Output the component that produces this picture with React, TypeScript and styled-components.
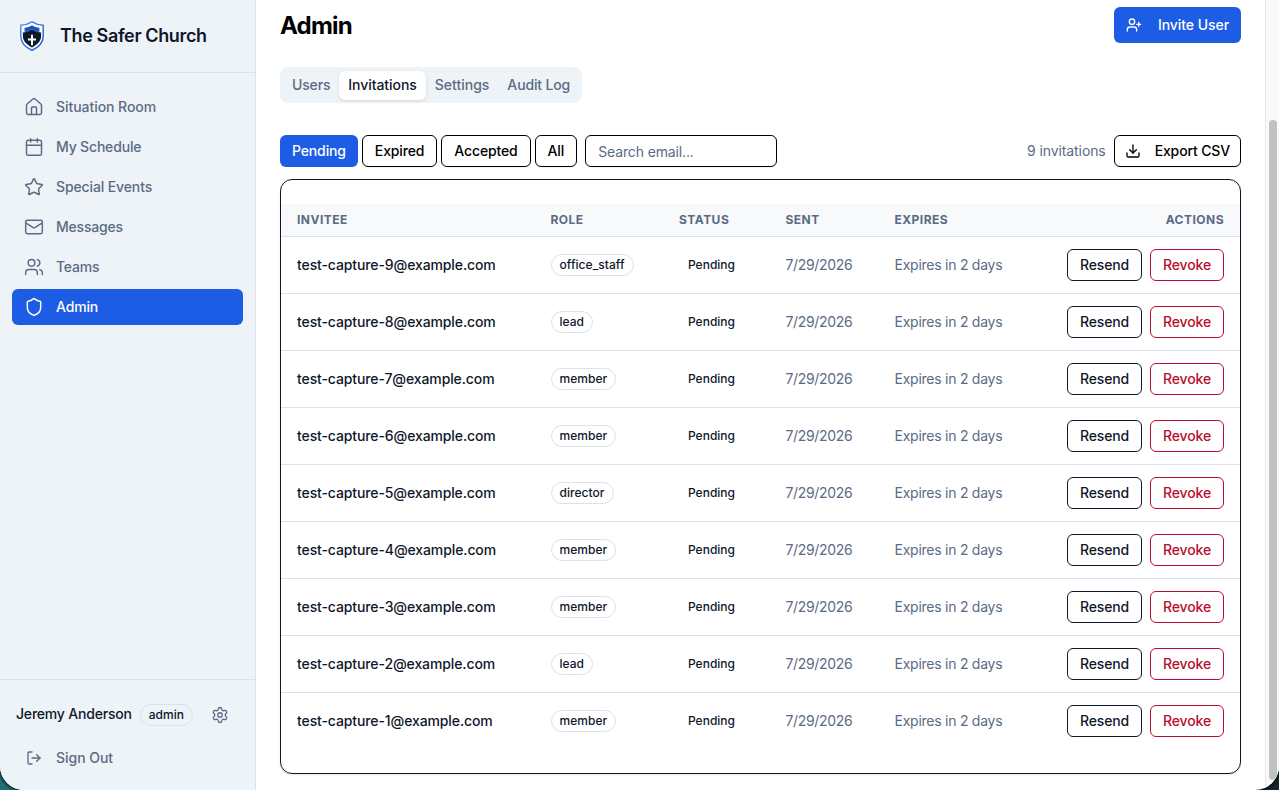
import React from 'react';
import styled, { createGlobalStyle, css } from 'styled-components';
import { House, Calendar, Star, Mail, Users, Shield, Settings, LogOut, UserPlus, Download } from 'lucide-react';

const GlobalStyle = createGlobalStyle`
  *, *::before, *::after { box-sizing: border-box; }
  body {
    margin: 0;
    overflow: hidden;
    background: linear-gradient(to right, #1d6f70 0, #1d6f70 40px, #14252c 60%);
    font-family: Inter, "Liberation Sans", sans-serif;
    font-size: 14px;
    line-height: 20px;
    color: #0f172a;
    -webkit-font-smoothing: antialiased;
  }
  button, input { font: inherit; color: inherit; margin: 0; }
`;

const Window = styled.div`
  display: flex;
  height: 790px;
  overflow: hidden;
  background: #fff;
  border-radius: 0 0 24px 24px;
  box-shadow: 0 0 3px 1px #000;
`;

const Sidebar = styled.aside`
  display: flex;
  flex-direction: column;
  width: 256px;
  flex: none;
  background: #eef3f8;
  border-right: 1px solid #dbe2ea;
`;

const Brand = styled.div`
  display: flex;
  align-items: center;
  gap: 16px;
  height: 73px;
  padding: 0 20px;
  border-bottom: 1px solid #dbe2ea;
  font-size: 18px;
  font-weight: 600;
  letter-spacing: -0.37px;
  svg { flex: none; }
`;

const Nav = styled.nav`
  display: flex;
  flex-direction: column;
  flex: 1;
  gap: 4px;
  padding: 16px 12px;
`;

const NavItem = styled.a<{ $active?: boolean; $tracking?: number }>`
  display: flex;
  align-items: center;
  gap: 12px;
  height: 36px;
  padding: 0 12px;
  border-radius: 6px;
  font-weight: 500;
  letter-spacing: ${p => p.$tracking ?? -0.1}px;
  color: ${p => (p.$active ? '#fff' : '#5b6b84')};
  background: ${p => (p.$active ? '#1d5ce5' : 'transparent')};
`;

const IconSlot = styled.span`
  display: flex;
  justify-content: center;
  width: 20px;
`;

const Account = styled.div`
  display: flex;
  flex-direction: column;
  gap: 7px;
  height: 111px;
  padding: 16px 12px 14px;
  border-top: 1px solid #dbe2ea;
`;

const Profile = styled.div`
  display: flex;
  align-items: center;
  height: 38px;
  padding-left: 4px;
`;

const ProfileName = styled.span`
  padding-bottom: 2px;
  font-weight: 500;
  letter-spacing: -0.2px;
`;

const GearButton = styled.span`
  display: flex;
  margin-left: 18px;
  color: #5b6b84;
`;

const Badge = styled.span<{ $plain?: boolean }>`
  display: inline-flex;
  align-items: center;
  height: 22px;
  padding: 0 8px;
  border: 1px solid ${p => (p.$plain ? 'transparent' : '#dbe2ec')};
  border-radius: 11px;
  font-size: 12px;
  line-height: 16px;
  font-weight: 500;
  letter-spacing: ${p => (p.$plain ? 0 : 0.04)}px;
  font-variant-ligatures: none;
`;

const ProfileBadge = styled(Badge)`
  margin-left: 8px;
`;

const Main = styled.main`
  flex: 1;
  padding: 7px 24px 0;
`;

const PageHeader = styled.header`
  display: flex;
  justify-content: space-between;
  height: 60px;
`;

const Title = styled.h1`
  margin: 0;
  font-size: 24px;
  line-height: 37px;
  font-weight: 700;
  letter-spacing: -0.8px;
  color: #000;
`;

const Button = styled.button<{ $tone?: 'primary' | 'ink' | 'danger' }>`
  display: inline-flex;
  align-items: center;
  height: 32px;
  padding: 0 12px;
  border: 1px solid #000;
  border-radius: 6px;
  background: #fff;
  font-weight: 500;
  letter-spacing: -0.14px;
  color: #000;
  white-space: nowrap;
  box-shadow: 0 1px 2px rgba(0, 0, 0, 0.05);
  ${p => p.$tone === 'primary' && css`
    border: 0;
    background: #1d5ce5;
    color: #fff;
    box-shadow: none;
  `}
  ${p => p.$tone === 'ink' && css`
    border-color: #0f172a;
    color: #0f172a;
    box-shadow: none;
  `}
  ${p => p.$tone === 'danger' && css`
    border-color: #b80d2c;
    color: #b80d2c;
    box-shadow: none;
  `}
`;

const InviteButton = styled(Button)`
  gap: 16px;
  height: 36px;
  letter-spacing: -0.06px;
`;

const ExportButton = styled(Button)`
  gap: 14px;
  padding: 0 10px;
`;

const Tabs = styled.div`
  display: inline-flex;
  align-items: center;
  height: 36px;
  padding: 0 3px;
  border-radius: 8px;
  background: #eef3f8;
  vertical-align: top;
`;

const Tab = styled.span<{ $active?: boolean; $tracking: number }>`
  display: flex;
  align-items: center;
  height: 29px;
  padding: 0 9px;
  border-radius: 6px;
  font-weight: 500;
  letter-spacing: ${p => p.$tracking}px;
  color: ${p => (p.$active ? '#0f172a' : '#5b6b84')};
  ${p => p.$active && css`
    background: #fff;
    box-shadow: 0 1px 3px rgba(0, 0, 0, 0.12);
  `}
`;

const Toolbar = styled.div`
  display: flex;
  align-items: center;
  gap: 4px;
  margin: 32px 0 12px;
`;

const Search = styled.input`
  width: 192px;
  height: 32px;
  margin-left: 4px;
  padding: 0 12px;
  border: 1px solid #000;
  border-radius: 6px;
  background: #fff;
  outline: none;
  letter-spacing: -0.13px;
  box-shadow: 0 1px 2px rgba(0, 0, 0, 0.05);
  &::placeholder { color: #5b6b84; opacity: 1; }
`;

const Count = styled.span`
  margin: 0 4px 0 auto;
  letter-spacing: -0.1px;
  color: #5b6b84;
`;

const Card = styled.section`
  padding: 24px 0;
  border: 1px solid #0f172a;
  border-radius: 12px;
  background: #fff;
  box-shadow: 0 1px 2px rgba(0, 0, 0, 0.1);
`;

const Row = styled.div`
  display: grid;
  grid-template-columns: 253.5px 128.5px 106.5px 109px 1fr auto;
  align-items: center;
  height: 57px;
  padding: 0 16px;
  border-bottom: 1px solid #dbe2ec;
  color: #5b6b84;
  &:last-child { height: 56px; border-bottom: 0; }
`;

const HeadRow = styled(Row)`
  height: 33px;
  padding-bottom: 1px;
  background: #f7f9fb;
  font-size: 12px;
  line-height: 16px;
  font-weight: 700;
  letter-spacing: 0.48px;
`;

const Email = styled.span`
  font-weight: 500;
  letter-spacing: -0.11px;
  color: #0f172a;
`;

const BadgeCell = styled.span`
  display: flex;
  color: #0f172a;
`;

const SentDate = styled.span`
  letter-spacing: -0.33px;
`;

const Expiry = styled.span`
  letter-spacing: -0.25px;
`;

const Actions = styled.div`
  display: flex;
  gap: 8px;
`;

const ScrollTrack = styled.div`
  width: 14px;
  flex: none;
  padding: 120px 2px 10px 3px;
  border-left: 1px solid #e8e8e8;
  background: #fafafa;
`;

const ScrollThumb = styled.div`
  width: 8px;
  height: 660px;
  border-radius: 4px;
  background: #c1c1c1;
`;

const Logo = () => (
  <svg width="24" height="30" viewBox="0 0 24 30">
    <defs>
      <linearGradient id="rim" x1="0" y1="0" x2="1" y2="1">
        <stop offset="0" stopColor="#4b9bf0" />
        <stop offset="1" stopColor="#1d58d8" />
      </linearGradient>
    </defs>
    <path d="M12 .8C8.500 3 4.500 4 .8 4.300V15c0 7 5 11.500 11.200 14.300C18.200 26.500 23.200 22 23.200 15V4.300C19.500 4 15.500 3 12 .8Z" fill="#fff" stroke="url(#rim)" strokeWidth="1.500" />
    <path d="M12 4.200C9.700 5.600 7.200 6.400 4.600 6.700V12H19.400V6.700C16.800 6.400 14.300 5.600 12 4.200Z" fill="#1c50c8" />
    <path d="M12 8.300C9 10.300 6 11.100 2.900 11.500v3.800C2.900 20 7 24 12 26.500c5-2.500 9.100-6.500 9.100-11.200v-3.800C18 11.100 15 10.300 12 8.300Z" fill="#10182c" />
    <path d="M3.500 11.300C7 10.800 9.600 9.800 12 8.200c2.400 1.600 5 2.600 8.500 3.100" fill="none" stroke="#dfe8f5" strokeWidth=".4" strokeDasharray="1 .6" />
    <path d="M11 13.700h2v3.700h3v2h-3V24.300h-2v-4.900H8v-2h3Z" fill="#fff" />
  </svg>
);

const navigation = [
  { label: 'Situation Room', Icon: House, tracking: -0.05 },
  { label: 'My Schedule', Icon: Calendar, tracking: -0.18 },
  { label: 'Special Events', Icon: Star, tracking: -0.12 },
  { label: 'Messages', Icon: Mail, tracking: -0.22 },
  { label: 'Teams', Icon: Users, tracking: -0.22 },
  { label: 'Admin', Icon: Shield, tracking: -0.15, active: true },
];

const roles = ['office_staff', 'lead', 'member', 'member', 'director', 'member', 'member', 'lead', 'member'];

export default function App() {
  return (
    <>
      <GlobalStyle />
      <Window>
        <Sidebar>
          <Brand><Logo />The Safer Church</Brand>
          <Nav>
            {navigation.map(({ label, Icon, tracking, active }) => (
              <NavItem key={label} $active={active} $tracking={tracking}><Icon size={20} strokeWidth={1.75} />{label}</NavItem>
            ))}
          </Nav>
          <Account>
            <Profile>
              <ProfileName>Jeremy Anderson</ProfileName>
              <ProfileBadge>admin</ProfileBadge>
              <GearButton><Settings size={18} strokeWidth={1.75} /></GearButton>
            </Profile>
            <NavItem $tracking={-0.03}><IconSlot><LogOut size={16} strokeWidth={2} /></IconSlot>Sign Out</NavItem>
          </Account>
        </Sidebar>
        <Main>
          <PageHeader>
            <Title>Admin</Title>
            <InviteButton $tone="primary"><UserPlus size={16} strokeWidth={2} />Invite User</InviteButton>
          </PageHeader>
          <Tabs>
            <Tab $tracking={-0.15}>Users</Tab>
            <Tab $tracking={-0.06} $active>Invitations</Tab>
            <Tab $tracking={0}>Settings</Tab>
            <Tab $tracking={-0.15}>Audit Log</Tab>
          </Tabs>
          <Toolbar>
            <Button $tone="primary">Pending</Button>
            <Button>Expired</Button>
            <Button>Accepted</Button>
            <Button>All</Button>
            <Search placeholder="Search email..." />
            <Count>9 invitations</Count>
            <ExportButton><Download size={16} strokeWidth={2} />Export CSV</ExportButton>
          </Toolbar>
          <Card>
            <HeadRow>
              <span>INVITEE</span><span>ROLE</span><span>STATUS</span><span>SENT</span><span>EXPIRES</span><span>ACTIONS</span>
            </HeadRow>
            {roles.map((role, i) => (
              <Row key={i}>
                <Email>test-capture-{9 - i}@example.com</Email>
                <BadgeCell><Badge>{role}</Badge></BadgeCell>
                <BadgeCell><Badge $plain>Pending</Badge></BadgeCell>
                <SentDate>7/29/2026</SentDate>
                <Expiry>Expires in 2 days</Expiry>
                <Actions>
                  <Button $tone="ink">Resend</Button>
                  <Button $tone="danger">Revoke</Button>
                </Actions>
              </Row>
            ))}
          </Card>
        </Main>
        <ScrollTrack><ScrollThumb /></ScrollTrack>
      </Window>
    </>
  );
}
